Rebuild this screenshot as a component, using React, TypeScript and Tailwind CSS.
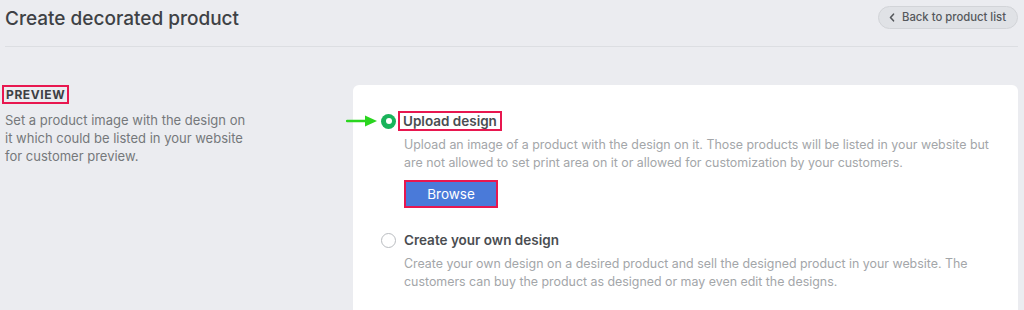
import React from 'react'

const font = { fontFamily: 'Inter, "Noto Sans", sans-serif' }

const RadioOption = ({
  checked,
  title,
  text,
  children,
}: {
  checked?: boolean
  title: string
  text: string
  children?: React.ReactNode
}) => (
  <div className="flex flex-col">
    <div className="flex items-center gap-[8px]">
      <div className="relative flex h-[15px] w-[15px] shrink-0 items-center justify-center">
        {checked ? (
          <span className="flex h-[15px] w-[15px] items-center justify-center rounded-full bg-[#19b35a]">
            <span className="h-[6px] w-[6px] rounded-full bg-white" />
          </span>
        ) : (
          <span className="h-[15px] w-[15px] rounded-full border border-[#b9bcc0] bg-white" />
        )}
        {checked && (
          <svg className="absolute left-[-35px] top-[0px]" width="32" height="14" viewBox="0 0 32 14">
            <path d="M1 7 H21" stroke="#2ad51f" strokeWidth="2.5" strokeLinecap="round" />
            <path d="M19 1.5 L31 7 L19 12.5 Z" fill="#2ad51f" />
          </svg>
        )}
      </div>
      {checked ? (
        <span className="-ml-[6px] h-[20px] border-2 border-[#e8174f] px-[3px] text-[13.5px] font-semibold leading-[16px] text-[#4a4d51]">
          {title}
        </span>
      ) : (
        <span className="h-[16px] text-[13.5px] font-semibold leading-[16px] text-[#4a4d51]">{title}</span>
      )}
    </div>
    <div className={checked ? 'mt-[5px] pl-[23px]' : 'mt-[7px] pl-[23px]'}>
      <p className="text-[12.4px] leading-[18px] text-[#a3a6a9]">{text}</p>
      {children}
    </div>
  </div>
)

export default function App() {
  return (
    <div className="h-[310px] w-[1024px] overflow-hidden bg-[#ebecf0]" style={font}>
      <div className="ml-[5px] mr-[6px] flex h-[47px] items-start justify-between border-b border-[#dcdee2]">
        <h1 className="mt-[7px] text-[19px] font-medium leading-[24px] text-[#3e4145]">Create decorated product</h1>
        <button className="mt-[6px] flex h-[23px] items-center gap-[7px] rounded-full border border-[#d2d4d8] bg-[#e0e2e6] pl-[10px] pr-[11px] text-[11.3px] font-medium text-[#55585c]">
          <svg width="6" height="9" viewBox="0 0 6 9">
            <path d="M4.5 1.2 L1.5 4.5 L4.5 7.8" stroke="#55585c" strokeWidth="1.6" fill="none" strokeLinecap="round" strokeLinejoin="round" />
          </svg>
          Back to product list
        </button>
      </div>

      <div className="mt-[38px] flex">
        <div className="w-[353px] shrink-0 pl-[2px]">
          <div className="h-[19px] w-fit border-2 border-[#e8174f] px-[2px] text-[12px] font-bold leading-[15px] tracking-[0.6px] text-[#3d4044]">
            PREVIEW
          </div>
          <p className="mt-[7px] w-[250px] pl-[3px] text-[13px] leading-[18px] text-[#75787b]">
            Set a product image with the design on it which could be listed in your website for customer preview.
          </p>
        </div>

        <div className="flex h-[240px] w-[665px] flex-col gap-[24px] rounded-[6px] bg-white pl-[28px] pr-[20px] pt-[26px]">
          <RadioOption
            checked
            title="Upload design"
            text="Upload an image of a product with the design on it. Those products will be listed in your website but are not allowed to set print area on it or allowed for customization by your customers."
          >
            <button className="mt-[8px] h-[28px] w-[94px] border-2 border-[#e8174f] bg-[#4a7ad9] text-[13.5px] text-white">
              Browse
            </button>
          </RadioOption>
          <RadioOption
            title="Create your own design"
            text="Create your own design on a desired product and sell the designed product in your website. The customers can buy the product as designed or may even edit the designs."
          />
        </div>
      </div>
    </div>
  )
}
